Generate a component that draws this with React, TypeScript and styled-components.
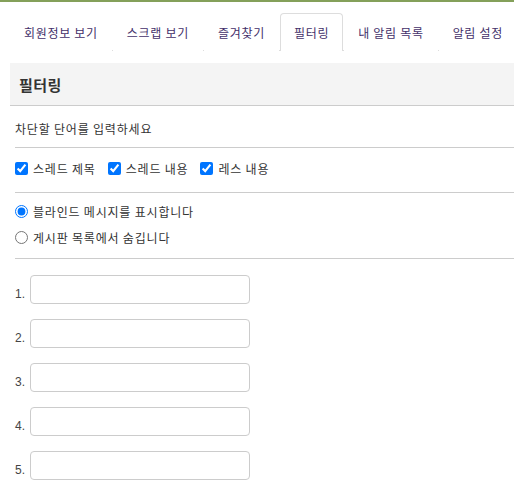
import { createGlobalStyle } from "styled-components";
import styled from "styled-components";

const tabs = ["회원정보 보기", "스크랩 보기", "즐겨찾기", "필터링", "내 알림 목록", "알림 설정"];
const activeTab = "필터링";

function App() {
  return (
    <>
      <GlobalStyle />
      <Page>
        <TabBar>
          {tabs.map((t) => (
            <Tab key={t} $active={t === activeTab}>
              {t}
            </Tab>
          ))}
        </TabBar>
        <Title>필터링</Title>
        <Content>
          <Section $top={14} $bottom={11}>
            <Line>차단할 단어를 입력하세요</Line>
          </Section>
          <Section $top={12} $bottom={16}>
            <Line $gap={12}>
              <Check>
                <input type="checkbox" defaultChecked />
                스레드 제목
              </Check>
              <Check>
                <input type="checkbox" defaultChecked />
                스레드 내용
              </Check>
              <Check>
                <input type="checkbox" defaultChecked />
                레스 내용
              </Check>
            </Line>
          </Section>
          <Section $top={10} $bottom={13} $gap={10}>
            <Line>
              <Check>
                <input type="radio" name="mode" defaultChecked />
                블라인드 메시지를 표시합니다
              </Check>
            </Line>
            <Line>
              <Check>
                <input type="radio" name="mode" />
                게시판 목록에서 숨깁니다
              </Check>
            </Line>
          </Section>
          <WordList>
            {[1, 2, 3, 4, 5].map((n) => (
              <WordRow key={n}>
                <Num>{n}.</Num>
                <WordInput type="text" />
              </WordRow>
            ))}
          </WordList>
        </Content>
      </Page>
    </>
  );
}

const GlobalStyle = createGlobalStyle`
  body {
    margin: 0;
    background: #fff;
    font-family: "Noto Sans CJK KR", "Noto Sans", sans-serif;
    color: #333;
  }
`;

const Page = styled.div`
  border-top: 2px solid #84a05a;
  padding: 11px 0 0 10px;
`;

const TabBar = styled.div`
  display: flex;
  border-bottom: 1px solid #ddd;
  height: 38px;
  box-sizing: border-box;
`;

const Tab = styled.div<{ $active: boolean }>`
  display: flex;
  align-items: center;
  padding: 0 13px;
  font-size: 12px;
  letter-spacing: 0.7px;
  color: #43306a;
  white-space: nowrap;
  border: 1px solid ${(p) => (p.$active ? "#ddd" : "transparent")};
  border-bottom: none;
  border-radius: 4px 4px 0 0;
  background: #fff;
  margin-bottom: -1px;
  height: 38px;
  box-sizing: border-box;
  & + & {
    margin-left: 1px;
  }
`;

const Title = styled.h2`
  margin: 12px 0 0;
  height: 43px;
  box-sizing: border-box;
  background: #f4f4f4;
  border-bottom: 1px solid #ccc;
  display: flex;
  align-items: center;
  padding: 0 9px;
  font-size: 15px;
  letter-spacing: 0.5px;
  font-weight: bold;
  color: #333;
`;

const Content = styled.div`
  padding-left: 5px;
`;

const Section = styled.div<{ $top: number; $bottom: number; $gap?: number }>`
  display: flex;
  flex-direction: column;
  gap: ${(p) => p.$gap ?? 0}px;
  padding: ${(p) => p.$top}px 0 ${(p) => p.$bottom}px;
  border-bottom: 1px solid #ccc;
`;

const Line = styled.div<{ $gap?: number }>`
  display: flex;
  align-items: center;
  height: 16px;
  font-size: 12px;
  letter-spacing: 0.8px;
  gap: ${(p) => p.$gap ?? 9}px;
`;

const Check = styled.label`
  display: flex;
  align-items: center;
  gap: 5px;
  input {
    margin: 0;
    width: 13px;
    height: 13px;
  }
`;

const WordList = styled.div`
  display: flex;
  flex-direction: column;
  gap: 15px;
  padding-top: 16px;
`;

const WordRow = styled.div`
  display: flex;
  align-items: flex-end;
  gap: 5px;
`;

const Num = styled.span`
  font-family: "Liberation Sans", Arial, sans-serif;
  font-size: 12px;
  line-height: 14px;
  margin-bottom: 3px;
  color: #444;
`;

const WordInput = styled.input`
  width: 220px;
  height: 29px;
  box-sizing: border-box;
  border: 1px solid #ccc;
  border-radius: 4px;
  outline: none;
`;

export default App;
